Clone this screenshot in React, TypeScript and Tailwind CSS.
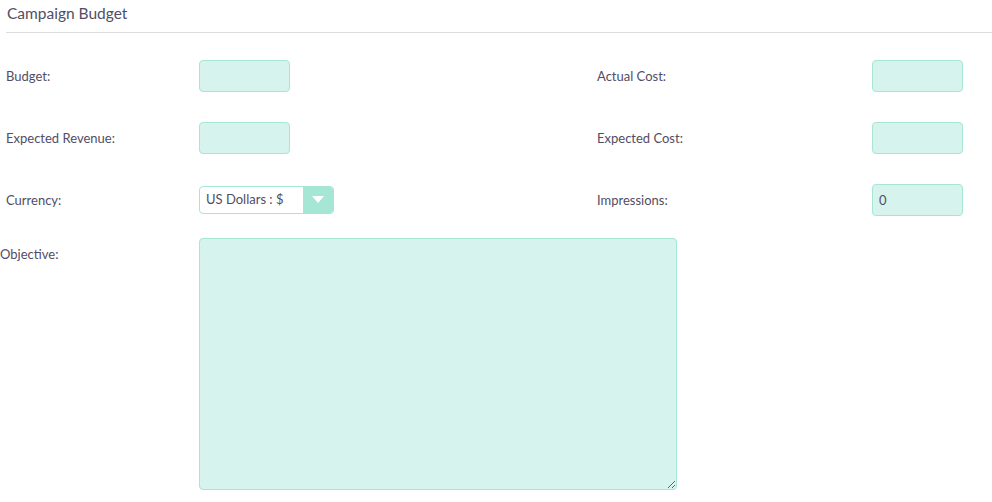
import React from "react";

const box =
  "h-[32px] w-[91px] rounded-[4px] border border-[#a5e6d5] bg-[#d6f4ed] px-[6px] text-[13px] text-[#534d64] outline-none";

function Label({ children }: { children: React.ReactNode }) {
  return <div className="pt-[2px] text-[13px] text-[#534d64]">{children}</div>;
}

export default function App() {
  return (
    <div className="w-[992px] bg-white font-['Lato',sans-serif] text-[#534d64]">
      {/* Header */}
      <div className="ml-[6px] flex h-[33px] items-center border-b border-[#dddddd] pb-[4px]">
        <h2 className="pl-px text-[15.5px] font-normal text-[#534d64]">Campaign Budget</h2>
      </div>

      {/* Fields */}
      <div className="ml-[6px] mt-[27px] grid grid-cols-[193px_398px_275px_1fr] gap-y-[30px]">
        <div className="flex h-[32px] items-center"><Label>Budget:</Label></div>
        <div className="flex items-center"><input className={box} /></div>
        <div className="flex items-center"><Label>Actual Cost:</Label></div>
        <div className="flex items-center"><input className={box} /></div>

        <div className="flex h-[32px] items-center"><Label>Expected Revenue:</Label></div>
        <div className="flex items-center"><input className={box} /></div>
        <div className="flex items-center"><Label>Expected Cost:</Label></div>
        <div className="flex items-center"><input className={box} /></div>

        <div className="flex h-[32px] items-center"><Label>Currency:</Label></div>
        <div className="flex items-center">
          <div className="flex h-[28px] w-[135px] overflow-hidden rounded-[4px] border border-[#a5e6d5] bg-white">
            <span className="flex flex-1 items-center pl-[6px] text-[13px] text-[#534d64]">US Dollars : $</span>
            <span className="flex w-[30px] items-center justify-center bg-[#a5e6d5]">
              <svg width="12" height="8" viewBox="0 0 12 8">
                <path d="M0 0h12L6 7z" fill="#ffffff" />
              </svg>
            </span>
          </div>
        </div>
        <div className="flex items-center"><Label>Impressions:</Label></div>
        <div className="flex items-center"><input className={box} defaultValue="0" /></div>
      </div>

      {/* Objective */}
      <div className="mt-[22px] grid grid-cols-[199px_1fr]">
        <div className="pt-[5px]"><Label>Objective:</Label></div>
        <div>
          <textarea className="block h-[252px] w-[478px] rounded-[4px] border border-[#a5e6d5] bg-[#d6f4ed] p-[6px] text-[13px] outline-none" />
        </div>
      </div>
    </div>
  );
}
